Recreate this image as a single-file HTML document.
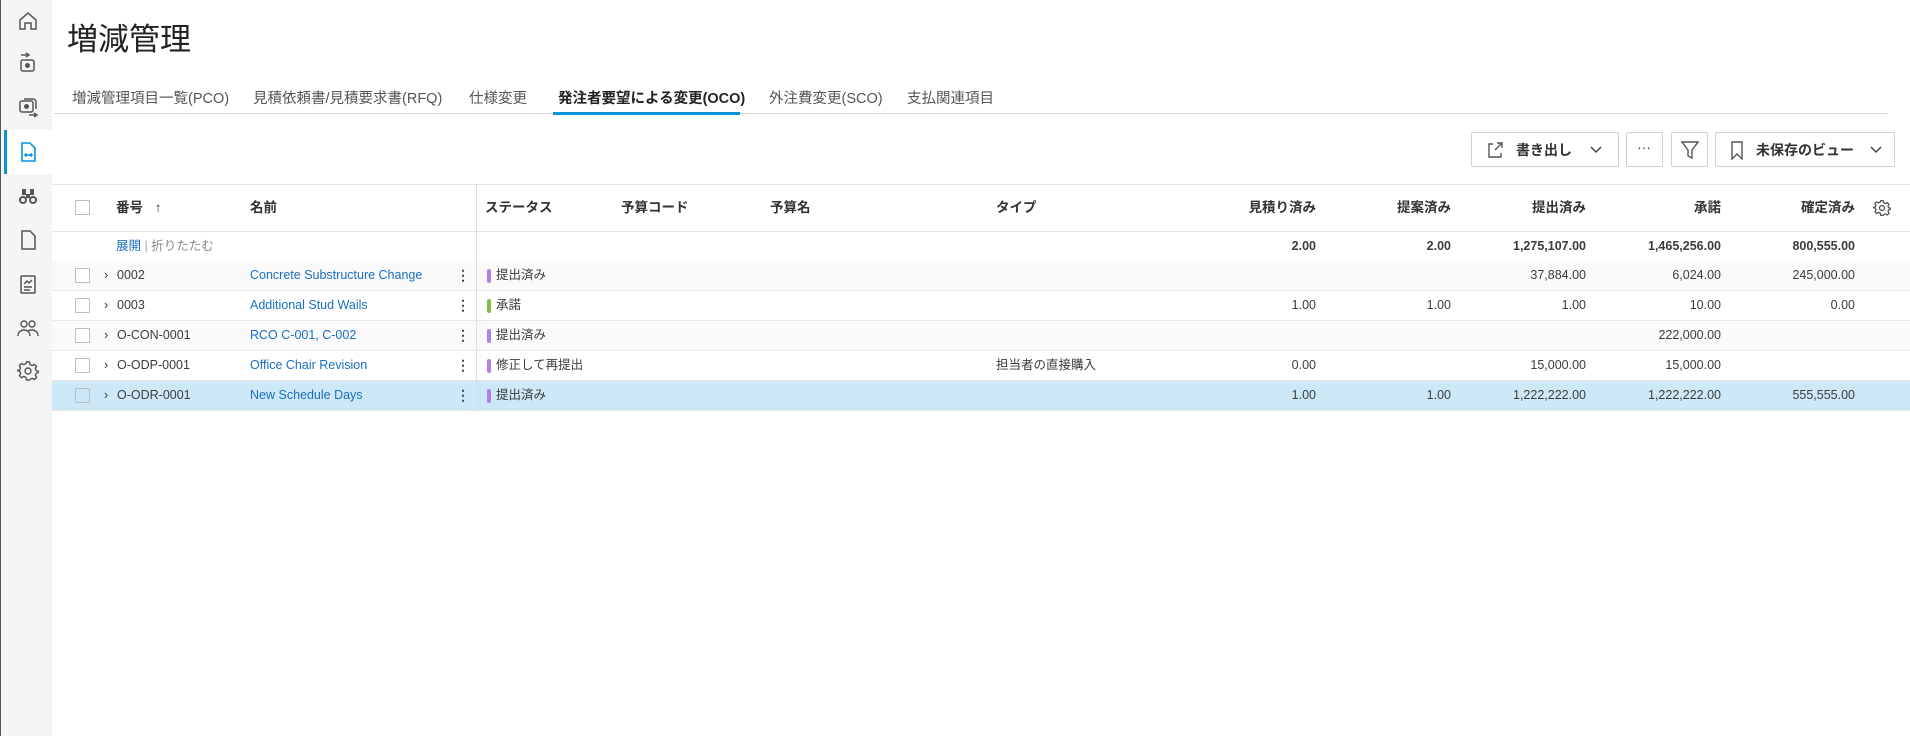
<!DOCTYPE html>
<html><head><meta charset="utf-8"><style>
*{margin:0;padding:0;box-sizing:border-box}
body{width:1910px;height:736px;background:#fff;font-family:"Liberation Sans","Noto Sans CJK JP",sans-serif;color:#3c3c3c;position:relative;overflow:hidden}
.a{position:absolute;white-space:nowrap}
#side{position:absolute;left:0;top:0;width:52px;height:736px;background:#f5f5f5;border-left:1px solid #555}
.ic{position:absolute;left:16px;width:22px;height:22px}
.tab{position:absolute;top:87px;font-size:14.5px;color:#555}
.btn{position:absolute;top:132px;height:35px;border:1px solid #cfcfcf;border-radius:2px;background:#fff}
.hd{position:absolute;top:184px;line-height:47px;font-size:13.5px;font-weight:bold;color:#333}
.row{position:absolute;left:52px;width:1858px;height:30px;border-bottom:1px solid #e8e8e8}
.cb{position:absolute;left:23px;top:7px;width:15px;height:15px;border:1px solid #bdbdbd;background:#fff;border-radius:1px}
.t{position:absolute;top:0;line-height:29px;font-size:12.5px;color:#3c3c3c}
.lk{color:#1a6fbe}
.r{text-align:right}
.bar{position:absolute;left:435px;top:8px;width:4px;height:14px;border-radius:2px;background:#b27ee8}
.keb{position:absolute;left:404px;top:0;line-height:29px;font-size:14px;font-weight:bold;color:#444}
.s{position:absolute;top:231px;line-height:30px;font-size:12.5px;font-weight:bold;width:100px;text-align:right}
</style></head><body>
<div id="side">
<svg class="ic" style="top:10px" viewBox="0 0 22 22" fill="none" stroke="#555" stroke-width="1.5"><path d="M3 10L11 3l8 7v9h-5v-6H8v6H3z"/></svg>
<svg class="ic" style="top:52px" viewBox="0 0 22 22" fill="none" stroke="#555" stroke-width="1.5"><path d="M4 3h8M9 1l3 2-3 2"/><rect x="4" y="8" width="13" height="11" rx="2"/><circle cx="10.5" cy="13.5" r="1.8" fill="#555"/></svg>
<svg class="ic" style="top:96px" viewBox="0 0 22 22" fill="none" stroke="#555" stroke-width="1.5"><rect x="3" y="5" width="13" height="11" rx="2"/><path d="M7 3h9a3 3 0 013 3v7"/><circle cx="9.5" cy="10.5" r="1.8" fill="#555"/><path d="M12 19h8M17 17l3 2-3 2"/></svg>
<div style="position:absolute;left:3px;top:130px;width:49px;height:44px;background:#fff;border-left:3px solid #0696d7"></div>
<svg class="ic" style="top:141px" viewBox="0 0 22 22" fill="none" stroke="#0696d7" stroke-width="1.6"><path d="M5 2h8l5 5v13H5z"/><path d="M8 14h7M9.5 12.5L8 14l1.5 1.5M13.5 12.5L15 14l-1.5 1.5"/></svg>
<svg class="ic" style="top:185px" viewBox="0 0 22 22" fill="#555"><path d="M5 4h4v6H5zM13 4h4v6h-4zM9 9h4v4H9z"/><circle cx="6" cy="15" r="4"/><circle cx="16" cy="15" r="4"/><circle cx="6" cy="15" r="2" fill="#f5f5f5"/><circle cx="16" cy="15" r="2" fill="#f5f5f5"/></svg>
<svg class="ic" style="top:229px" viewBox="0 0 22 22" fill="none" stroke="#555" stroke-width="1.5"><path d="M5 2h8l5 5v13H5z"/></svg>
<svg class="ic" style="top:273px" viewBox="0 0 22 22" fill="none" stroke="#555" stroke-width="1.5"><rect x="4" y="3" width="14" height="17" rx="1"/><path d="M7 11l3-3 2 2 3-3M7 14h8M7 17h6"/></svg>
<svg class="ic" style="top:317px" viewBox="0 0 22 22" fill="none" stroke="#555" stroke-width="1.4"><circle cx="7" cy="7" r="3"/><circle cx="15" cy="7" r="3"/><path d="M1 19c0-4 3-6 6-6s6 2 6 6M11 14c1-1 2-1 4-1 3 0 6 2 6 6"/></svg>
<svg class="ic" style="top:360px" viewBox="0 0 22 22" fill="none" stroke="#555" stroke-width="1.4"><circle cx="11" cy="11" r="3"/><path d="M9.5 2h3l.6 2.6 2 1 2.4-1.2 2 2-1.2 2.4 1 2L22 11.5v-1 2l-2.6.6-1 2 1.2 2.4-2 2-2.4-1.2-2 1L12.5 20h-3l-.6-2.6-2-1-2.4 1.2-2-2 1.2-2.4-1-2L0 10.5v1-1l2.6-.6 1-2-1.2-2.4 2-2 2.4 1.2 2-1z"/></svg>
</div>

<div class="a" style="left:67px;top:14px;font-size:31px;color:#222;font-family:'Noto Sans CJK JP',sans-serif">増減管理</div>

<div class="tab" style="left:72px">増減管理項目一覧(PCO)</div>
<div class="tab" style="left:253px">見積依頼書/見積要求書(RFQ)</div>
<div class="tab" style="left:469px">仕様変更</div>
<div class="tab" style="left:558px;font-weight:bold;color:#222">発注者要望による変更(OCO)</div>
<div class="tab" style="left:769px">外注費変更(SCO)</div>
<div class="tab" style="left:907px">支払関連項目</div>
<div class="a" style="left:54px;top:113px;width:1834px;height:1px;background:#d6d6d6"></div>
<div class="a" style="left:553px;top:112px;width:187px;height:3px;background:#0696d7"></div>

<div class="btn" style="left:1471px;width:148px">
<svg class="a" style="left:14px;top:8px" width="18" height="18" viewBox="0 0 18 18" fill="none" stroke="#555" stroke-width="1.4"><path d="M7 3H3v13h12v-4M9 9l7-7M11 2h5v5"/></svg>
<span class="a" style="left:44px;top:7px;font-size:14px;font-weight:bold;color:#333">書き出し</span>
<svg class="a" style="left:118px;top:12px" width="12" height="10" viewBox="0 0 12 10" fill="none" stroke="#444" stroke-width="1.5"><path d="M1 2l5 5 5-5"/></svg></div>
<div class="btn" style="left:1626px;width:37px"><span class="a" style="left:10px;top:6px;font-size:14px;color:#444">···</span></div>
<div class="btn" style="left:1671px;width:37px"><svg class="a" style="left:9px;top:7px" width="18" height="20" viewBox="0 0 18 20" fill="none" stroke="#555" stroke-width="1.4"><path d="M1 2h16l-6 8v8l-4-2v-6z"/></svg></div>
<div class="btn" style="left:1715px;width:180px">
<svg class="a" style="left:14px;top:8px" width="14" height="19" viewBox="0 0 14 19" fill="none" stroke="#555" stroke-width="1.4"><path d="M2 1h10v17l-5-5-5 5z"/></svg>
<span class="a" style="left:40px;top:7px;font-size:14px;font-weight:bold;color:#333">未保存のビュー</span>
<svg class="a" style="left:154px;top:12px" width="12" height="10" viewBox="0 0 12 10" fill="none" stroke="#444" stroke-width="1.5"><path d="M1 2l5 5 5-5"/></svg></div>

<div class="a" style="left:52px;top:184px;width:1858px;height:1px;background:#e5e5e5"></div>
<div class="a" style="left:52px;top:231px;width:1858px;height:1px;background:#e5e5e5"></div>
<div class="a" style="left:52px;top:261px;width:1858px;height:1px;background:#e5e5e5"></div>
<div class="cb" style="left:75px;top:200px"></div>
<div class="hd" style="left:116px">番号 <span style="margin-left:8px">↑</span></div>
<div class="hd" style="left:250px">名前</div>
<div class="hd" style="left:485px">ステータス</div>
<div class="hd" style="left:621px">予算コード</div>
<div class="hd" style="left:770px">予算名</div>
<div class="hd" style="left:996px">タイプ</div>
<div class="hd r" style="left:1216px;width:100px">見積り済み</div>
<div class="hd r" style="left:1351px;width:100px">提案済み</div>
<div class="hd r" style="left:1486px;width:100px">提出済み</div>
<div class="hd r" style="left:1621px;width:100px">承諾</div>
<div class="hd r" style="left:1755px;width:100px">確定済み</div>
<svg class="a" style="left:1873px;top:199px" width="18" height="18" viewBox="0 0 22 22" fill="none" stroke="#555" stroke-width="1.6"><circle cx="11" cy="11" r="3"/><path d="M9.5 2h3l.6 2.6 2 1 2.4-1.2 2 2-1.2 2.4 1 2L22 11.5v-1 2l-2.6.6-1 2 1.2 2.4-2 2-2.4-1.2-2 1L12.5 20h-3l-.6-2.6-2-1-2.4 1.2-2-2 1.2-2.4-1-2L0 10.5v1-1l2.6-.6 1-2-1.2-2.4 2-2 2.4 1.2 2-1z"/></svg>

<div class="a" style="left:116px;top:231px;line-height:30px;font-size:12.5px"><span class="lk">展開</span> <span style="color:#aaa">|</span> <span style="color:#888">折りたたむ</span></div>
<div class="s" style="left:1216px">2.00</div>
<div class="s" style="left:1351px">2.00</div>
<div class="s" style="left:1486px">1,275,107.00</div>
<div class="s" style="left:1621px">1,465,256.00</div>
<div class="s" style="left:1755px">800,555.00</div>

<div class="row" style="top:261px;background:#fafafa"><div class="cb"></div><div class="t" style="left:52px">›</div><div class="t" style="left:65px">0002</div><div class="t lk" style="left:198px">Concrete Substructure Change</div><div class="keb">⋮</div><div class="bar"></div><div class="t" style="left:444px">提出済み</div><div class="t r" style="left:1434px;width:100px">37,884.00</div><div class="t r" style="left:1569px;width:100px">6,024.00</div><div class="t r" style="left:1703px;width:100px">245,000.00</div></div>
<div class="row" style="top:291px"><div class="cb"></div><div class="t" style="left:52px">›</div><div class="t" style="left:65px">0003</div><div class="t lk" style="left:198px">Additional Stud Wails</div><div class="keb">⋮</div><div class="bar" style="background:#87bc40"></div><div class="t" style="left:444px">承諾</div><div class="t r" style="left:1164px;width:100px">1.00</div><div class="t r" style="left:1299px;width:100px">1.00</div><div class="t r" style="left:1434px;width:100px">1.00</div><div class="t r" style="left:1569px;width:100px">10.00</div><div class="t r" style="left:1703px;width:100px">0.00</div></div>
<div class="row" style="top:321px;background:#fafafa"><div class="cb"></div><div class="t" style="left:52px">›</div><div class="t" style="left:65px">O-CON-0001</div><div class="t lk" style="left:198px">RCO C-001, C-002</div><div class="keb">⋮</div><div class="bar"></div><div class="t" style="left:444px">提出済み</div><div class="t r" style="left:1569px;width:100px">222,000.00</div></div>
<div class="row" style="top:351px"><div class="cb"></div><div class="t" style="left:52px">›</div><div class="t" style="left:65px">O-ODP-0001</div><div class="t lk" style="left:198px">Office Chair Revision</div><div class="keb">⋮</div><div class="bar"></div><div class="t" style="left:444px">修正して再提出</div><div class="t" style="left:944px">担当者の直接購入</div><div class="t r" style="left:1164px;width:100px">0.00</div><div class="t r" style="left:1434px;width:100px">15,000.00</div><div class="t r" style="left:1569px;width:100px">15,000.00</div></div>
<div class="row" style="top:381px;background:#cde8f6"><div class="cb" style="background:#cde8f6"></div><div class="t" style="left:52px">›</div><div class="t" style="left:65px">O-ODR-0001</div><div class="t lk" style="left:198px">New Schedule Days</div><div class="keb">⋮</div><div class="bar"></div><div class="t" style="left:444px">提出済み</div><div class="t r" style="left:1164px;width:100px">1.00</div><div class="t r" style="left:1299px;width:100px">1.00</div><div class="t r" style="left:1434px;width:100px">1,222,222.00</div><div class="t r" style="left:1569px;width:100px">1,222,222.00</div><div class="t r" style="left:1703px;width:100px">555,555.00</div></div>
<div class="a" style="left:476px;top:184px;width:1px;height:228px;background:#e0e0e0;box-shadow:2px 0 3px rgba(0,0,0,.06)"></div>
</body></html>
